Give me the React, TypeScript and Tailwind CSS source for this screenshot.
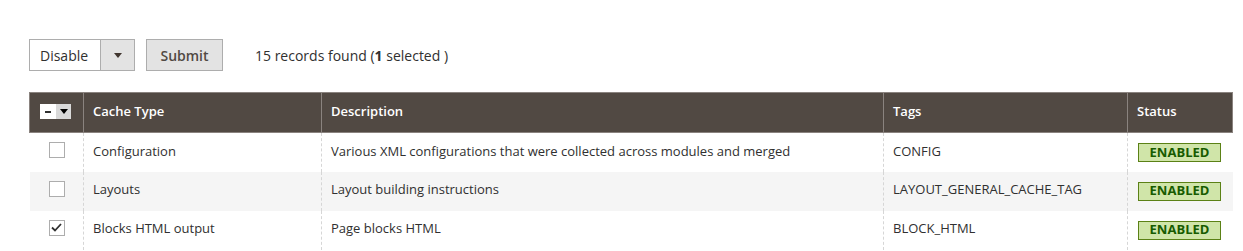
import { useState } from "react";

type Row = { type: string; description: string; tag: string; checked: boolean };

const rows: Row[] = [
  {
    type: "Configuration",
    description: "Various XML configurations that were collected across modules and merged",
    tag: "CONFIG",
    checked: false,
  },
  { type: "Layouts", description: "Layout building instructions", tag: "LAYOUT_GENERAL_CACHE_TAG", checked: false },
  { type: "Blocks HTML output", description: "Page blocks HTML", tag: "BLOCK_HTML", checked: true },
];

const Checkbox = ({ checked }: { checked: boolean }) => (
  <span className="flex h-[16px] w-[16px] items-center justify-center border border-[#adadad] bg-white">
    {checked && (
      <svg width="11" height="9" viewBox="0 0 11 9">
        <path d="M1 4.5 L4 7.5 L10 1" stroke="#303030" strokeWidth="1.8" fill="none" />
      </svg>
    )}
  </span>
);

const App = () => {
  const [selected] = useState(1);

  return (
    <div className="h-[251px] w-[1243px] overflow-hidden bg-white pt-[39px] pl-[29px] pr-[11px] font-['Open_Sans',sans-serif] text-[13px] text-[#303030]">
      <div className="flex items-center">
        <div className="flex h-[32px] w-[106px] border border-[#adadad] bg-white">
          <span className="flex flex-1 items-center pl-[10px] text-[14px]">Disable</span>
          <span className="flex w-[34px] items-center justify-center border-l border-[#adadad] bg-[#e3e3e3]">
            <svg width="8" height="5" viewBox="0 0 8 5">
              <path d="M0 0 H8 L4 5 Z" fill="#41362f" />
            </svg>
          </span>
        </div>
        <button className="ml-[11px] h-[32px] w-[77px] border border-[#adadad] bg-[#e3e3e3] text-[14px] font-semibold text-[#514943]">
          Submit
        </button>
        <span className="ml-[32px] text-[14px]">
          15 records found (<b>{selected}</b> selected )
        </span>
      </div>

      <table className="mt-[21px] w-[1203px] table-fixed border-collapse">
        <colgroup>
          <col className="w-[54px]" />
          <col className="w-[238px]" />
          <col className="w-[562px]" />
          <col className="w-[244px]" />
          <col className="w-[105px]" />
        </colgroup>
        <thead>
          <tr className="h-[40px] bg-[#514943] text-left text-[13px] font-semibold text-white">
            <th className="border border-[#8a837f] pl-[10px] pb-[2px]">
              <span className="flex h-[15px] w-[31px]">
                <span className="flex w-[16px] items-center justify-center bg-white">
                  <span className="h-[2px] w-[6px] bg-[#303030]" />
                </span>
                <span className="flex flex-1 items-center justify-center bg-[#d9d9d9]">
                  <svg width="8" height="5" viewBox="0 0 8 5">
                    <path d="M0 0 H8 L4 5 Z" fill="#000" />
                  </svg>
                </span>
              </span>
            </th>
            <th className="border border-[#8a837f] px-[9px] pb-[2px] font-semibold">Cache Type</th>
            <th className="border border-[#8a837f] px-[9px] pb-[2px] font-semibold">Description</th>
            <th className="border border-[#8a837f] px-[9px] pb-[2px] font-semibold">Tags</th>
            <th className="border border-[#8a837f] px-[9px] pb-[2px] font-semibold">Status</th>
          </tr>
        </thead>
        <tbody>
          {rows.map((row, i) => (
            <tr key={row.type} className={`h-[39px] ${i % 2 === 1 ? "bg-[#f5f5f5]" : "bg-white"}`}>
              <td className="border-r border-dashed border-[#d6d6d6] pl-[19px] align-top pt-[9px]">
                <Checkbox checked={row.checked} />
              </td>
              <td className="border-r border-dashed border-[#d6d6d6] px-[9px] pb-[2px]">{row.type}</td>
              <td className="border-r border-dashed border-[#d6d6d6] px-[9px] pb-[2px]">{row.description}</td>
              <td className="border-r border-dashed border-[#d6d6d6] px-[9px] pb-[2px]">{row.tag}</td>
              <td className="px-[10px]">
                <span className="flex h-[19px] w-[83px] items-center justify-center border border-[#5b8116] bg-[#d0e5a9] text-[13px] font-bold text-[#185b00]">
                  ENABLED
                </span>
              </td>
            </tr>
          ))}
        </tbody>
      </table>
    </div>
  );
};

export default App;
